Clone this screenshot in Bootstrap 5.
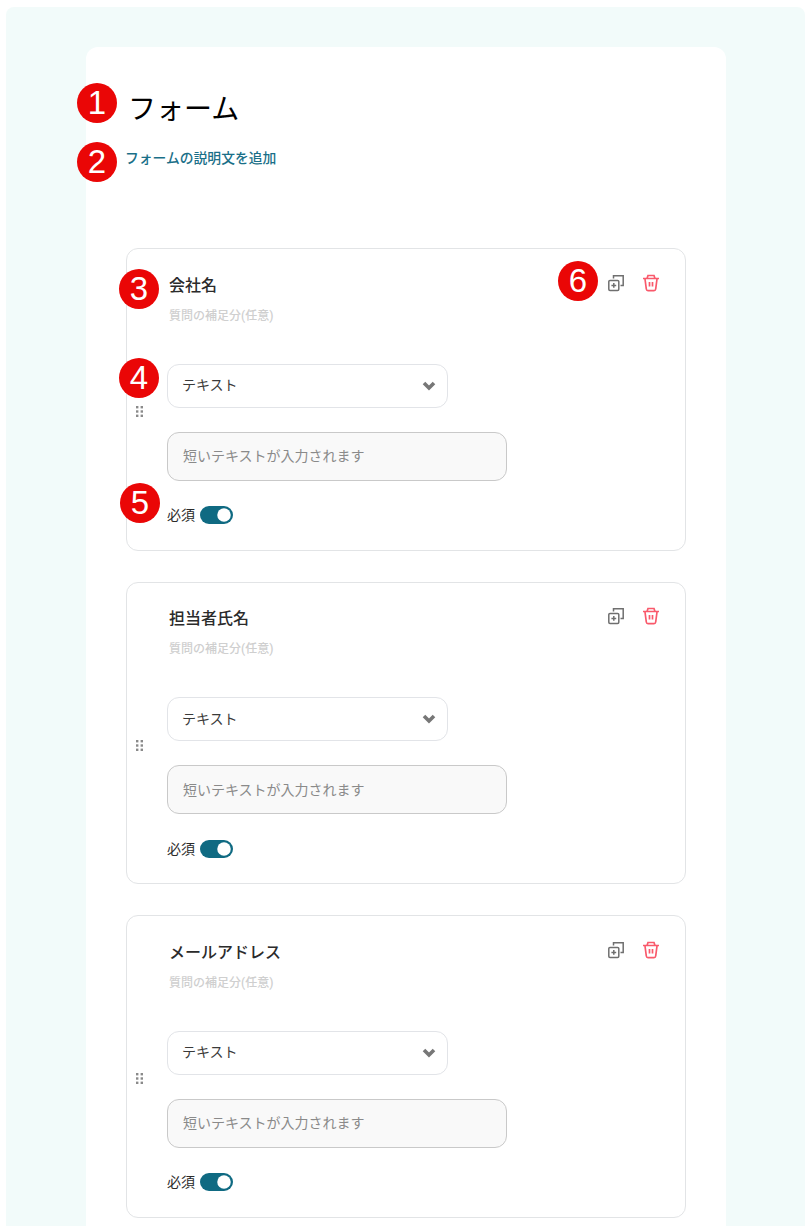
<!DOCTYPE html>
<html lang="ja">
<head>
    <meta charset="UTF-8">
    <title>フォーム</title>
    <link rel="stylesheet" href="https://cdn.jsdelivr.net/npm/bootstrap@5.3.0/dist/css/bootstrap.min.css">
    <style>
        html, body { height: 1226px; overflow: hidden; }
        body {
            font-family: "Roboto", "Noto Sans CJK JP", sans-serif;
            color: #2b2b2b;
            background: #fff;
        }
        .page-bg {
            margin: 7px 0 0 6px;
            padding: 40px 79px 0 80px;
            background: #f2fbfa;
            border-radius: 8px 8px 0 0;
            height: 1219px;
            overflow: hidden;
        }
        .form-panel {
            position: relative;
            background: #fff;
            border-radius: 12px 12px 0 0;
            padding: 40px 40px 0;
            height: 1179px;
        }
        .form-title {
            font-size: 28px;
            line-height: 42px;
            font-weight: 400;
            color: #000;
            margin: 2px 0 0 2px;
            font-family: "Liberation Sans", "Noto Sans CJK JP", sans-serif;
        }
        .form-desc {
            font-size: 13.8px;
            font-weight: 500;
            line-height: 20px;
            color: #1a6f88;
            margin: 17px 0 80px -1px;
        }
        .question-list { gap: 31px; }
        .question-box {
            position: relative;
            height: 302.5px;
            border: 1px solid #e2e4e6;
            border-radius: 12px;
        }
        .grip-col { width: 40px; padding: 25px 0 0 8px; }
        .grip-col svg { display: block; }
        .question-body { padding: 24.6px 24px 0 0; }
        .q-title { font-size: 16px; font-weight: 500; line-height: 24px; margin-left: 2px; color: #2b2b2b; }
        .q-note { font-size: 12px; font-weight: 500; line-height: 18px; margin: 9px 0 0 2px; color: #cfcfcf; }
        .type-select.form-select {
            width: 281px;
            height: 44px;
            margin-top: 39.1px;
            padding: 0 40px 0 14px;
            font-size: 14px;
            color: #3a3a3a;
            border: 1px solid #e2e4e8;
            border-radius: 12px;
            background-size: 14px 10px;
            background-position: right 11px center;
            background-image: url("data:image/svg+xml,%3csvg xmlns='http://www.w3.org/2000/svg' viewBox='0 0 14 10'%3e%3cpath fill='none' stroke='%23777' stroke-width='3.6' d='M2 2l5 5 5-5'/%3e%3c/svg%3e");
        }
        .short-input.form-control {
            width: 340px;
            height: 49px;
            margin-top: 24px;
            padding: 0 15px;
            font-size: 14px;
            background: #f9f9f9;
            border: 1px solid #c9c9c9;
            border-radius: 12px;
        }
        .short-input.form-control::placeholder { color: #8a8a8a; opacity: 1; }
        .req-row { margin-top: 25.4px; height: 18px; }
        .req-label { font-size: 14px; color: #2b2b2b; line-height: 18px; }
        .req-switch.form-check { min-height: 0; padding-left: 0; margin: 0 0 0 5px; display: flex; }
        .req-switch .form-check-input {
            width: 33px;
            height: 18px;
            margin: 0;
            border: 0;
            background-color: #0f6a82;
        }
        .tool-btn { width: 18px; height: 18px; padding: 0; border: 0; background: none; display: block; }
        .tool-group { gap: 17px; margin: -3.6px 1px 0 0; }
        .step-dot {
            position: absolute;
            width: 40px;
            height: 40px;
            border-radius: 50%;
            background: #ea0606;
            color: #fff;
            font-family: "Liberation Sans", sans-serif;
            font-size: 33px;
            line-height: 40px;
            text-align: center;
        }
        .dot-1 { left: -9px; top: 36px; }
        .dot-2 { left: -9px; top: 95px; }
        .dot-3 { left: -8px; top: 20px; }
        .dot-4 { left: -8px; top: 109px; }
        .dot-5 { left: -7px; top: 234px; }
        .dot-6 { left: 431px; top: 12px; }
    </style>
</head>
<body>
    <div class="page-bg">
        <div class="form-panel">
            <span class="step-dot dot-1">1</span>
            <span class="step-dot dot-2">2</span>
            <h1 class="form-title">フォーム</h1>
            <p class="form-desc">フォームの説明文を追加</p>

            <div class="question-list d-flex flex-column">

                <div class="question-box d-flex">
                    <span class="step-dot dot-3">3</span>
                    <span class="step-dot dot-4">4</span>
                    <span class="step-dot dot-5">5</span>
                    <span class="step-dot dot-6">6</span>
                    <div class="grip-col d-flex align-items-center">
                        <svg width="9" height="13" viewBox="0 0 9 13" fill="#8a8a8a"><rect x="1" y="1" width="2.4" height="2.4"/><rect x="5.6" y="1" width="2.4" height="2.4"/><rect x="1" y="5.3" width="2.4" height="2.4"/><rect x="5.6" y="5.3" width="2.4" height="2.4"/><rect x="1" y="9.6" width="2.4" height="2.4"/><rect x="5.6" y="9.6" width="2.4" height="2.4"/></svg>
                    </div>
                    <div class="question-body flex-grow-1">
                        <div class="d-flex justify-content-between align-items-start">
                            <div>
                                <div class="q-title">会社名</div>
                                <div class="q-note">質問の補足分(任意)</div>
                            </div>
                            <div class="tool-group d-flex">
                                <button class="tool-btn" type="button"><svg width="18" height="18" viewBox="0 0 18 18" fill="none" stroke="#6f6f6f" stroke-width="1.5"><path d="M6.5 4.5V1.8h9.7v9.7h-2.7"/><rect x="1.8" y="6.4" width="10" height="10" rx="1.2"/><path d="M6.8 9v4.8M4.4 11.4h4.8"/></svg></button>
                                <button class="tool-btn" type="button"><svg width="18" height="18" viewBox="0 0 18 18" fill="none" stroke="#f9596b" stroke-width="1.7"><path d="M1 4.5h16M5 4.5l1-3h6l1 3M3 5l1.3 10q.2 1.6 1.7 1.6h6q1.5 0 1.7-1.6L15 5M7.5 8v4.5M10.5 8v4.5"/></svg></button>
                            </div>
                        </div>
                        <select class="type-select form-select"><option>テキスト</option></select>
                        <input class="short-input form-control" type="text" placeholder="短いテキストが入力されます">
                        <div class="req-row d-flex align-items-center">
                            <span class="req-label">必須</span>
                            <div class="req-switch form-check form-switch"><input class="form-check-input" type="checkbox" checked></div>
                        </div>
                    </div>
                </div>

                <div class="question-box d-flex">
                    <div class="grip-col d-flex align-items-center">
                        <svg width="9" height="13" viewBox="0 0 9 13" fill="#8a8a8a"><rect x="1" y="1" width="2.4" height="2.4"/><rect x="5.6" y="1" width="2.4" height="2.4"/><rect x="1" y="5.3" width="2.4" height="2.4"/><rect x="5.6" y="5.3" width="2.4" height="2.4"/><rect x="1" y="9.6" width="2.4" height="2.4"/><rect x="5.6" y="9.6" width="2.4" height="2.4"/></svg>
                    </div>
                    <div class="question-body flex-grow-1">
                        <div class="d-flex justify-content-between align-items-start">
                            <div>
                                <div class="q-title">担当者氏名</div>
                                <div class="q-note">質問の補足分(任意)</div>
                            </div>
                            <div class="tool-group d-flex">
                                <button class="tool-btn" type="button"><svg width="18" height="18" viewBox="0 0 18 18" fill="none" stroke="#6f6f6f" stroke-width="1.5"><path d="M6.5 4.5V1.8h9.7v9.7h-2.7"/><rect x="1.8" y="6.4" width="10" height="10" rx="1.2"/><path d="M6.8 9v4.8M4.4 11.4h4.8"/></svg></button>
                                <button class="tool-btn" type="button"><svg width="18" height="18" viewBox="0 0 18 18" fill="none" stroke="#f9596b" stroke-width="1.7"><path d="M1 4.5h16M5 4.5l1-3h6l1 3M3 5l1.3 10q.2 1.6 1.7 1.6h6q1.5 0 1.7-1.6L15 5M7.5 8v4.5M10.5 8v4.5"/></svg></button>
                            </div>
                        </div>
                        <select class="type-select form-select"><option>テキスト</option></select>
                        <input class="short-input form-control" type="text" placeholder="短いテキストが入力されます">
                        <div class="req-row d-flex align-items-center">
                            <span class="req-label">必須</span>
                            <div class="req-switch form-check form-switch"><input class="form-check-input" type="checkbox" checked></div>
                        </div>
                    </div>
                </div>

                <div class="question-box d-flex">
                    <div class="grip-col d-flex align-items-center">
                        <svg width="9" height="13" viewBox="0 0 9 13" fill="#8a8a8a"><rect x="1" y="1" width="2.4" height="2.4"/><rect x="5.6" y="1" width="2.4" height="2.4"/><rect x="1" y="5.3" width="2.4" height="2.4"/><rect x="5.6" y="5.3" width="2.4" height="2.4"/><rect x="1" y="9.6" width="2.4" height="2.4"/><rect x="5.6" y="9.6" width="2.4" height="2.4"/></svg>
                    </div>
                    <div class="question-body flex-grow-1">
                        <div class="d-flex justify-content-between align-items-start">
                            <div>
                                <div class="q-title">メールアドレス</div>
                                <div class="q-note">質問の補足分(任意)</div>
                            </div>
                            <div class="tool-group d-flex">
                                <button class="tool-btn" type="button"><svg width="18" height="18" viewBox="0 0 18 18" fill="none" stroke="#6f6f6f" stroke-width="1.5"><path d="M6.5 4.5V1.8h9.7v9.7h-2.7"/><rect x="1.8" y="6.4" width="10" height="10" rx="1.2"/><path d="M6.8 9v4.8M4.4 11.4h4.8"/></svg></button>
                                <button class="tool-btn" type="button"><svg width="18" height="18" viewBox="0 0 18 18" fill="none" stroke="#f9596b" stroke-width="1.7"><path d="M1 4.5h16M5 4.5l1-3h6l1 3M3 5l1.3 10q.2 1.6 1.7 1.6h6q1.5 0 1.7-1.6L15 5M7.5 8v4.5M10.5 8v4.5"/></svg></button>
                            </div>
                        </div>
                        <select class="type-select form-select"><option>テキスト</option></select>
                        <input class="short-input form-control" type="text" placeholder="短いテキストが入力されます">
                        <div class="req-row d-flex align-items-center">
                            <span class="req-label">必須</span>
                            <div class="req-switch form-check form-switch"><input class="form-check-input" type="checkbox" checked></div>
                        </div>
                    </div>
                </div>

            </div>
        </div>
    </div>
    <script src="https://cdn.jsdelivr.net/npm/bootstrap@5.3.0/dist/js/bootstrap.bundle.min.js"></script>
</body>
</html>
